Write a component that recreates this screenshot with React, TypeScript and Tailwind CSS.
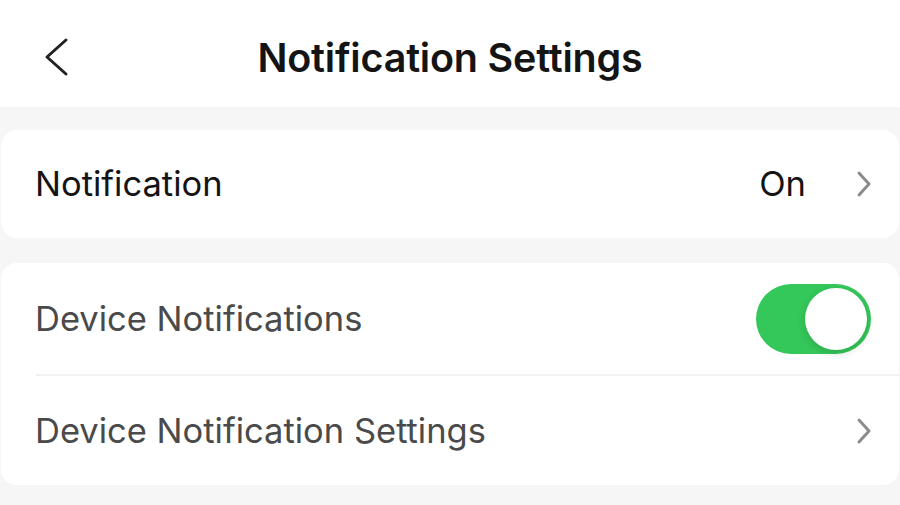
import React from "react";

function Chevron({ className = "" }: { className?: string }) {
  return (
    <svg width="16" height="28" viewBox="0 0 16 28" fill="none" className={className}>
      <path d="M3 3l10 11L3 25" stroke="currentColor" strokeWidth="3" strokeLinecap="round" strokeLinejoin="round" />
    </svg>
  );
}

function Toggle({ on }: { on: boolean }) {
  return (
    <div className={`flex h-[70px] w-[115px] items-center rounded-full p-[4px] ${on ? "justify-end bg-[#34c759]" : "justify-start bg-[#e5e5ea]"}`}>
      <div className="h-[62px] w-[62px] rounded-full bg-white shadow-[0_3px_8px_rgba(0,0,0,0.15)]" />
    </div>
  );
}

export default function App() {
  return (
    <div
      className="h-[505px] w-[900px] overflow-hidden bg-[#f6f6f6]"
      style={{ fontFamily: "Inter, 'Noto Sans', sans-serif" }}
    >
      <header className="relative flex h-[107px] items-center justify-center bg-white">
        <button className="absolute left-[42px] top-[37px] text-[#222]">
          <svg width="28" height="40" viewBox="0 0 28 40" fill="none">
            <path d="M24 3L5 20l19 17" stroke="currentColor" strokeWidth="3" strokeLinecap="round" strokeLinejoin="round" />
          </svg>
        </button>
        <h1 className="mt-[10px] text-[39.5px] font-semibold tracking-[-0.2px] text-[#141414]">Notification Settings</h1>
      </header>

      <div className="flex flex-col gap-[25px] pt-[23px]">
        <section className="mx-px rounded-[16px] bg-white">
          <div className="flex h-[108px] items-center pl-[34px] pr-[27px]">
            <span className="flex-1 text-[34.5px] text-[#141414]">Notification</span>
            <span className="mr-[50px] text-[34.5px] text-[#141414]">On</span>
            <Chevron className="text-[#8c8c8c]" />
          </div>
        </section>

        <section className="mx-px rounded-[16px] bg-white">
          <div className="flex h-[111px] items-center pl-[34px] pr-[28px]">
            <span className="flex-1 text-[34.5px] text-[#4a4a4a]">Device Notifications</span>
            <Toggle on />
          </div>
          <div className="ml-[35px] h-[2px] bg-[#f2f2f2]" />
          <div className="flex h-[109px] items-center pl-[34px] pr-[27px]">
            <span className="flex-1 text-[34.5px] text-[#4a4a4a]">Device Notification Settings</span>
            <Chevron className="text-[#8c8c8c]" />
          </div>
        </section>
      </div>
    </div>
  );
}
